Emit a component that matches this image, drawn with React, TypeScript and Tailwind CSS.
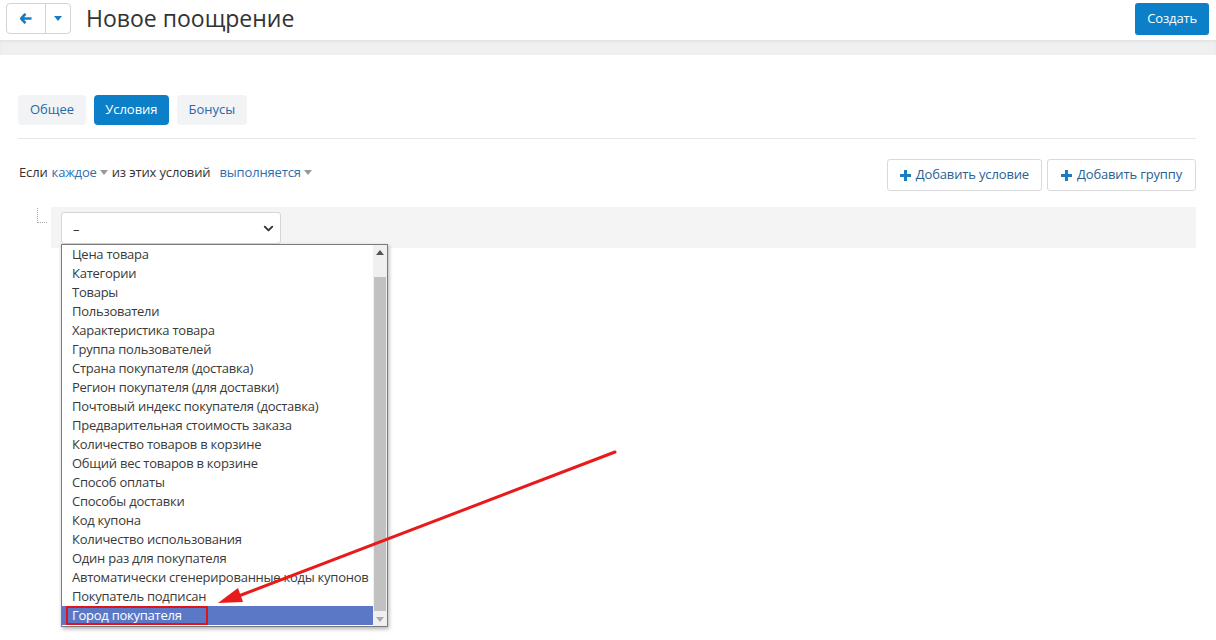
import { ChevronDown } from "lucide-react";

const items = [
  "Цена товара",
  "Категории",
  "Товары",
  "Пользователи",
  "Характеристика товара",
  "Группа пользователей",
  "Страна покупателя (доставка)",
  "Регион покупателя (для доставки)",
  "Почтовый индекс покупателя (доставка)",
  "Предварительная стоимость заказа",
  "Количество товаров в корзине",
  "Общий вес товаров в корзине",
  "Способ оплаты",
  "Способы доставки",
  "Код купона",
  "Количество использования",
  "Один раз для покупателя",
  "Автоматически сгенерированные коды купонов",
  "Покупатель подписан",
  "Город покупателя",
];

function Caret({ className = "" }: { className?: string }) {
  return (
    <svg width="8" height="5" viewBox="0 0 8 5" className={className}>
      <path d="M0 0h8L4 5z" fill="currentColor" />
    </svg>
  );
}

function Plus() {
  return (
    <svg width="11" height="11" viewBox="0 0 11 11">
      <path d="M4 0h3v4h4v3H7v4H4V7H0V4h4z" fill="#1a7dc4" />
    </svg>
  );
}

export default function App() {
  return (
    <div className="relative w-[1216px] h-[640px] overflow-hidden bg-white text-[#333] font-['Open_Sans',sans-serif] tracking-[-0.15px]">
      {/* header */}
      <div className="h-[40px] flex items-start justify-between pl-[6px] pr-[7px] pt-[3px]">
        <div className="flex items-center">
          <div className="flex h-[31px] border border-[#d4d4d4] rounded-[4px]">
            <button className="w-[39px] flex items-center justify-center border-r border-[#d4d4d4]">
              <svg width="12" height="11" viewBox="0 0 12 11">
                <path d="M5.5 0.8L1 5.5l4.5 4.7M1.2 5.5H11.5" stroke="#1a7dc4" strokeWidth="2.6" fill="none" />
              </svg>
            </button>
            <button className="w-[24px] flex items-center justify-center text-[#1a7dc4]">
              <Caret />
            </button>
          </div>
          <h1 className="ml-[15px] text-[23px] leading-[30px] text-[#333] -mt-[1px] tracking-normal">Новое поощрение</h1>
        </div>
        <button className="h-[32px] px-[12px] rounded-[3px] bg-[#0b80c8] text-white text-[13px]">Создать</button>
      </div>
      <div className="h-[15px] bg-[#eef0f1] shadow-[inset_0_2px_3px_rgba(0,0,0,0.05)]" />

      {/* content */}
      <div className="px-[18px] pr-[20px]">
        <div className="mt-[40px] flex gap-[8px] pb-[13px] border-b border-[#e6e6e6] tracking-normal">
          <div className="h-[30px] px-[12px] flex items-center rounded-[4px] bg-[#f2f3f4] text-[#2668a8] text-[13px]">Общее</div>
          <div className="h-[30px] px-[11px] flex items-center rounded-[4px] bg-[#0b80c8] text-white text-[13px]">Условия</div>
          <div className="h-[30px] px-[12px] flex items-center rounded-[4px] bg-[#f2f3f4] text-[#2668a8] text-[13px]">Бонусы</div>
        </div>

        <div className="mt-[20px] flex items-start justify-between">
          <div className="mt-[5px] ml-[1px] flex items-center text-[13px] leading-[16px]">
            <span>Если</span>
            <span className="ml-[4px] text-[#2a6fb0]">каждое</span>
            <Caret className="ml-[3px] text-[#999]" />
            <span className="ml-[4px]">из этих условий</span>
            <span className="ml-[9px] text-[#2a6fb0]">выполняется</span>
            <Caret className="ml-[3px] text-[#999]" />
          </div>
          <div className="flex gap-[5px]">
            <button className="h-[32px] px-[12px] flex items-center gap-[5px] border border-[#dadada] rounded-[3px] text-[13px] text-[#2a5f94]">
              <Plus />
              Добавить условие
            </button>
            <button className="h-[32px] px-[13px] flex items-center gap-[5px] border border-[#dadada] rounded-[3px] text-[13px] text-[#2a5f94]">
              <Plus />
              Добавить группу
            </button>
          </div>
        </div>

        <div className="mt-[16px] flex">
          <div className="w-[33px] pl-[19px] pt-[1px]">
            <div className="w-[10px] h-[15px] border-l border-b border-dotted border-[#aaa]" />
          </div>
          <div className="relative flex-1 h-[41px] bg-[#f4f4f4] pl-[10px] pt-[5px]">
            <div className="w-[220px] h-[32px] bg-white border border-[#d6d6d6] rounded-[3px] flex items-center justify-between pl-[11px] pr-[4px] text-[13px]">
              <span className="mt-[4px]">–</span>
              <ChevronDown size={15} strokeWidth={3} className="text-[#333]" />
            </div>

            {/* open list */}
            <div className="absolute left-[10px] top-[37px] w-[327px] h-[383px] bg-white border border-[#7a7a7a] shadow-[1px_2px_4px_rgba(0,0,0,0.3)] flex z-10">
              <ul className="flex-1 min-w-0 overflow-hidden text-[13px] leading-[19px] text-[#3a3a3a] tracking-[-0.25px]">
                {items.map((it, i) => (
                  <li
                    key={it}
                    className={
                      i === items.length - 1
                        ? "h-[19px] pl-[10px] bg-[#5b78c7] text-white relative"
                        : "h-[19px] pl-[10px] whitespace-nowrap"
                    }
                  >
                    {it}
                    {i === items.length - 1 && (
                      <span className="absolute left-[4px] top-0 w-[142px] h-[19px] border-2 border-[#e0131a]" />
                    )}
                  </li>
                ))}
              </ul>
              <div className="w-[14px] shrink-0 bg-[#f0f0f0] flex flex-col items-center">
                <div className="h-[14px] flex items-center justify-center text-[#555]">
                  <Caret className="rotate-180" />
                </div>
                <div className="w-[12px] flex-1 bg-[#c1c1c1] mt-[18px] mb-[1px]" />
                <div className="h-[14px] flex items-center justify-center text-[#aaa]">
                  <Caret />
                </div>
              </div>
            </div>
          </div>
        </div>
      </div>

      {/* annotation arrow */}
      <svg className="absolute left-0 top-0 pointer-events-none z-20" width="1216" height="640">
        <line x1="615" y1="452" x2="236" y2="597" stroke="#e81a1a" strokeWidth="3" strokeLinecap="round" />
        <path d="M218 603 L238 588 L243 602 Z" fill="#e81a1a" />
      </svg>
    </div>
  );
}
